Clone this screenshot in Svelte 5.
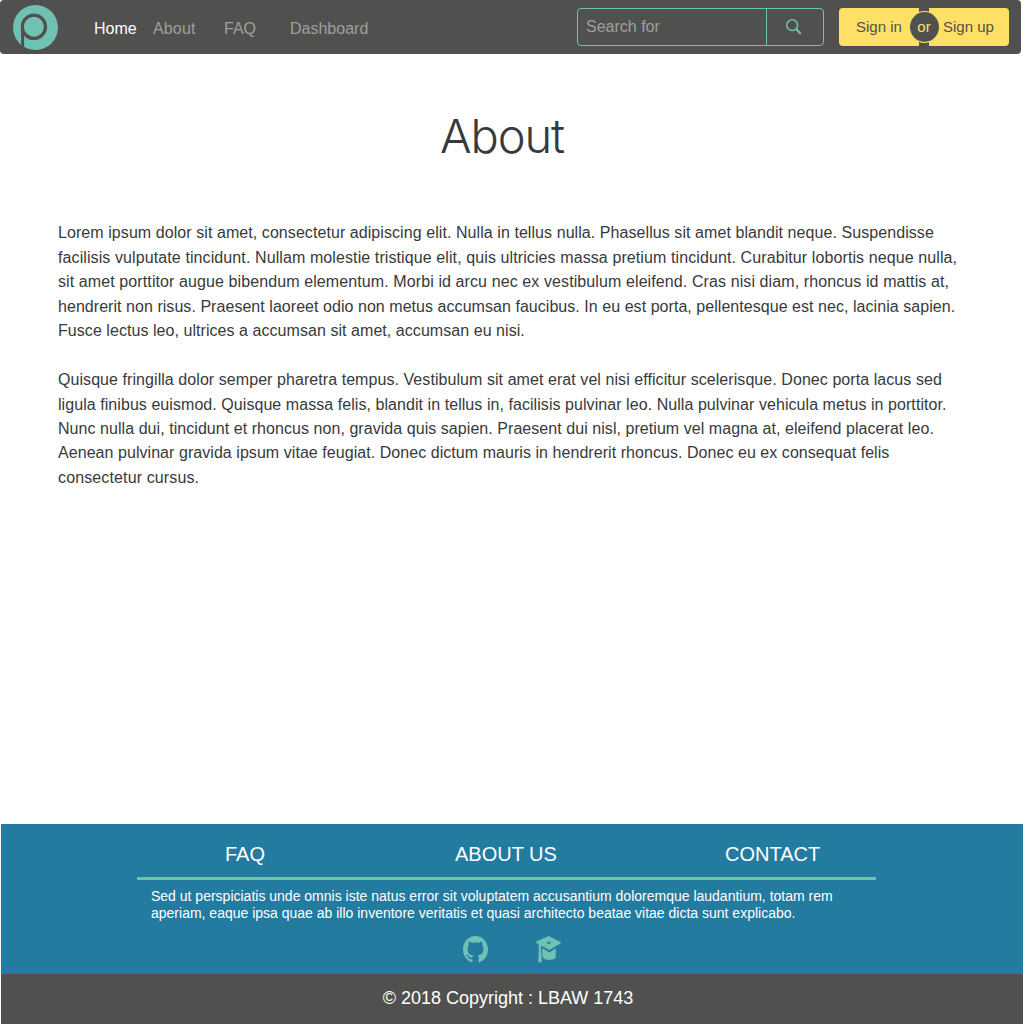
<script>
  const paragraphs = [
    [
      ['Lorem ipsum dolor sit amet, consectetur adipiscing elit. Nulla in tellus nulla. Phasellus sit amet blandit neque. Suspendisse', 0.07],
      ['facilisis vulputate tincidunt. Nullam molestie tristique elit, quis ultricies massa pretium tincidunt. Curabitur lobortis neque nulla,', 0.1],
      ['sit amet porttitor augue bibendum elementum. Morbi id arcu nec ex vestibulum eleifend. Cras nisi diam, rhoncus id mattis at,', 0.1],
      ['hendrerit non risus. Praesent laoreet odio non metus accumsan faucibus. In eu est porta, pellentesque est nec, lacinia sapien.', 0.047],
      ['Fusce lectus leo, ultrices a accumsan sit amet, accumsan eu nisi.', 0.054]
    ],
    [
      ['Quisque fringilla dolor semper pharetra tempus. Vestibulum sit amet erat vel nisi efficitur scelerisque. Donec porta lacus sed', 0.065],
      ['ligula finibus euismod. Quisque massa felis, blandit in tellus in, facilisis pulvinar leo. Nulla pulvinar vehicula metus in porttitor.', 0.06],
      ['Nunc nulla dui, tincidunt et rhoncus non, gravida quis sapien. Praesent dui nisl, pretium vel magna at, eleifend placerat leo.', 0.055],
      ['Aenean pulvinar gravida ipsum vitae feugiat. Donec dictum mauris in hendrerit rhoncus. Donec eu ex consequat felis', 0.053],
      ['consectetur cursus.', 0.13]
    ]
  ];
</script>

<div class="page">
  <nav>
    <svg class="logo" viewBox="0 0 46 46" width="46" height="46">
      <circle cx="22.5" cy="23.5" r="22.5" fill="#70c1b3" />
      <path d="M9.6 44V22.8" stroke="#50514f" stroke-width="3" fill="none" />
      <circle cx="20.9" cy="22.8" r="11.6" stroke="#50514f" stroke-width="3.2" fill="none" />
    </svg>
    <a class="home" href="#home">Home</a>
    <a class="about" href="#about">About</a>
    <a class="faq" href="#faq">FAQ</a>
    <a class="dash" href="#dashboard">Dashboard</a>
    <div class="search">
      <span class="field">Search for</span>
      <span class="go">
        <svg viewBox="0 0 16 16" width="16" height="16" fill="none" stroke="#70c1b3">
          <circle cx="6.2" cy="6.2" r="5.4" stroke-width="1.5" />
          <path d="M10 10l4.7 4.7" stroke-width="2.2" />
        </svg>
      </span>
    </div>
    <div class="auth">
      <span class="in">Sign in</span>
      <span class="up">Sign up</span>
      <span class="or">or</span>
    </div>
  </nav>

  <main>
    <h1>About</h1>
    {#each paragraphs as lines}
      <p>
        {#each lines as [line, tracking]}<span style="letter-spacing: {tracking}px">{line}</span>{/each}
      </p>
    {/each}
  </main>

  <footer>
    <div class="links">
      <a href="#faq">FAQ</a>
      <a href="#about">ABOUT US</a>
      <a href="#contact">CONTACT</a>
    </div>
    <div class="note">
      <span>Sed ut perspiciatis unde omnis iste natus error sit voluptatem accusantium doloremque laudantium, totam rem</span>
      <span>aperiam, eaque ipsa quae ab illo inventore veritatis et quasi architecto beatae vitae dicta sunt explicabo.</span>
    </div>
    <div class="icons">
      <svg viewBox="0 0 16 16" width="25" height="27" fill="#70c1b3" preserveAspectRatio="none">
        <path d="M8 0C3.58 0 0 3.58 0 8c0 3.54 2.29 6.53 5.47 7.59.4.07.55-.17.55-.38 0-.19-.01-.82-.01-1.49-2.01.37-2.53-.49-2.69-.94-.09-.23-.48-.94-.82-1.13-.28-.15-.68-.52-.01-.53.63-.01 1.08.58 1.23.82.72 1.21 1.87.87 2.33.66.07-.52.28-.87.51-1.07-1.78-.2-3.64-.89-3.64-3.95 0-.87.31-1.59.82-2.15-.08-.2-.36-1.02.08-2.12 0 0 .67-.21 2.2.82.64-.18 1.32-.27 2-.27s1.36.09 2 .27c1.53-1.04 2.2-.82 2.2-.82.44 1.1.16 1.92.08 2.12.51.56.82 1.27.82 2.15 0 3.07-1.87 3.75-3.65 3.95.29.25.54.73.54 1.48 0 1.07-.01 1.93-.01 2.2 0 .21.15.46.55.38A8.01 8.01 0 0 0 16 8c0-4.42-3.58-8-8-8z" />
      </svg>
      <svg viewBox="0 0 26 27" width="26" height="27" fill="#70c1b3">
        <path fill-rule="evenodd" d="M12.8 0L25.5 6.8 13.3 14 5 9.4V12l.8 14.2H2.3L2.8 12Q2 10.4 2.8 9L2.4 8 .2 6.9V5.4zM11 6.9a1.8 1.1 0 1 0 3.6 0a1.8 1.1 0 1 0-3.6 0z" />
        <path d="M6.2 12L13.2 16.4l6.6-4v8.6c-.6 2.2-3.4 2.9-6.4 2.9-3.2 0-5.8-.8-6.9-3z" />
      </svg>
    </div>
    <div class="copy">© 2018 Copyright : LBAW 1743</div>
  </footer>
</div>

<style>
  .page {
    width: 1024px;
    height: 1024px;
    display: flex;
    flex-direction: column;
    background: #fff;
    font: 16px 'Liberation Sans', Arial, sans-serif;
    color: #373a3c;
    overflow: hidden;
  }
  a { text-decoration: none; color: inherit; }
  span, a { white-space: nowrap; }
  nav {
    width: 1021px;
    height: 54px;
    box-sizing: border-box;
    padding-left: 13px;
    display: flex;
    align-items: center;
    background: #50514f;
    border-radius: 4px;
    color: #9f9f9d;
    flex: none;
  }
  .logo { margin-right: 35px; }
  nav a { flex: none; padding-top: 3px; }
  .home { width: 59px; color: #fff; }
  .about { width: 71px; letter-spacing: 0.15px; }
  .faq { width: 66px; }
  .dash { width: 287px; }
  .search {
    width: 247px;
    height: 38px;
    box-sizing: border-box;
    border: 1px solid #70c1b3;
    border-radius: 4px;
    display: flex;
    flex: none;
  }
  .field {
    padding-left: 8px;
    line-height: 35px;
    box-sizing: border-box;
    border-right: 1px solid #70c1b3;
    flex: 0 0 189px;
  }
  .go { flex: 1; display: flex; padding: 10px 0 0 19px; }
  .auth {
    position: relative;
    margin-left: 15px;
    width: 170px;
    height: 38px;
    display: flex;
    gap: 10px;
    font-size: 15px;
    line-height: 38px;
    color: #50514f;
  }
  .in, .up { width: 80px; box-sizing: border-box; background: #ffe066; }
  .in { border-radius: 4px 0 0 4px; padding-left: 17px; }
  .up { border-radius: 0 4px 4px 0; padding-left: 14px; }
  .or {
    position: absolute;
    left: 69.5px;
    top: 3px;
    width: 29px;
    height: 30px;
    border: 1px solid #ffe066;
    border-radius: 50%;
    background: #50514f;
    color: #ffe066;
    line-height: 30px;
    text-align: center;
  }
  main { flex: 1; padding: 0 58px; }
  h1 {
    margin: 54px 20px 0 0;
    height: 113.17px;
    font: 300 47px/56px Inter, sans-serif;
    letter-spacing: -1.1px;
    text-align: center;
  }
  p { margin: 0 0 24.45px; }
  p span { display: block; line-height: 24.48px; }
  footer {
    margin: 0 1px;
    height: 200px;
    flex: none;
    background: #247ba0;
    color: #fff;
    display: flex;
    flex-direction: column;
    align-items: center;
  }
  .links {
    width: 739px;
    height: 56px;
    box-sizing: border-box;
    padding: 7px 0 0 88px;
    margin-right: 11px;
    border-bottom: 3px solid #70c1b3;
    display: flex;
    font-size: 20px;
    line-height: 47px;
  }
  .links a:nth-child(1) { width: 230px; }
  .links a:nth-child(2) { width: 270px; }
  .note {
    width: 711px;
    margin: 8px 11px 0 0;
    font-size: 14px;
    line-height: 17px;
    height: 48px;
  }
  .note span { display: block; }
  .icons { display: flex; gap: 48px; height: 38px; margin-left: 1px; }
  .copy {
    align-self: stretch;
    height: 50px;
    padding-right: 8px;
    background: #50514f;
    font-size: 18px;
    line-height: 49px;
    text-align: center;
  }
</style>
